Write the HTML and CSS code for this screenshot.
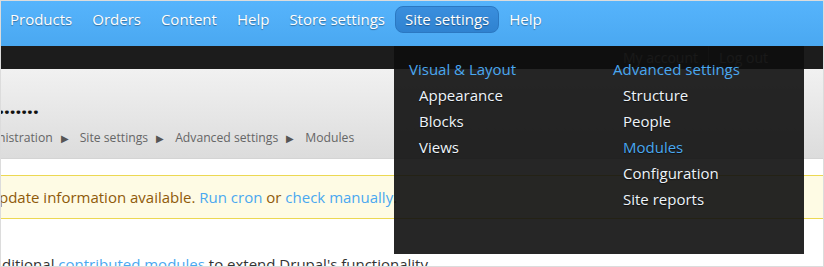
FILE: index.html
```html
<!DOCTYPE html>
<html>
<head>
<meta charset="utf-8">
<link rel="stylesheet" href="styles.css">
</head>
<body>
<div class="frame">
  <nav class="topbar">
    <a class="nav-item">Products</a>
    <a class="nav-item">Orders</a>
    <a class="nav-item">Content</a>
    <a class="nav-item">Help</a>
    <a class="nav-item">Store settings</a>
    <a class="nav-item active">Site settings</a>
    <a class="nav-item">Help</a>
  </nav>
  <div class="userbar">
    <span>My account</span><span class="sep"></span><span>Log out</span>
  </div>
  <header class="page-head">
    <h1 class="title">.......</h1>
    <div class="crumbs">
      <span class="crumb first">nistration</span><span class="arrow">&#9654;</span>
      <span class="crumb">Site settings</span><span class="arrow">&#9654;</span>
      <span class="crumb">Advanced settings</span><span class="arrow">&#9654;</span>
      <span class="crumb">Modules</span>
    </div>
  </header>
  <main class="content">
    <div class="msg">pdate information available. <a class="link">Run cron</a> or <a class="link">check manually</a>.</div>
    <p class="intro">ditional <a class="link">contributed modules</a> to extend Drupal's functionality.</p>
  </main>
  <div class="dropdown">
    <div class="col">
      <div class="col-head">Visual &amp; Layout</div>
      <div class="col-item">Appearance</div>
      <div class="col-item">Blocks</div>
      <div class="col-item">Views</div>
    </div>
    <div class="col">
      <div class="col-head">Advanced settings</div>
      <div class="col-item">Structure</div>
      <div class="col-item">People</div>
      <div class="col-item current">Modules</div>
      <div class="col-item">Configuration</div>
      <div class="col-item">Site reports</div>
    </div>
  </div>
</div>
</body>
</html>
```
FILE: styles.css
```css
* { box-sizing: border-box; }
html, body { margin: 0; padding: 0; background: #fff; }
body { font-family: "Open Sans", "Noto Sans", sans-serif; width: 824px; height: 267px; overflow: hidden; }

.frame {
  position: relative;
  width: 824px;
  height: 267px;
  border: 1px solid #dcdcdc;
  overflow: hidden;
  background: #fff;
}

.topbar {
  height: 45px;
  display: flex;
  align-items: flex-start;
  padding-top: 5px;
  margin-left: -1px;
  background: linear-gradient(#56b4fc, #4aa8f1);
}
.nav-item {
  display: block;
  height: 27px;
  line-height: 27px;
  padding: 0 10px;
  font-size: 15px;
  color: #fff;
  text-shadow: 0 1px 1px rgba(0,0,0,0.35);
  border-radius: 8px;
  white-space: nowrap;
}
.nav-item.active {
  line-height: 25px;
  padding: 0 9px;
  background: linear-gradient(#3a8fde, #2f82d0);
  border: 1px solid #2b78c2;
}

.userbar {
  height: 23px;
  background: #1c1c1c;
  display: flex;
  align-items: center;
  padding-left: 622px;
  gap: 10px;
  font-size: 14px;
  color: #7a7a7a;
}
.userbar .sep { width: 1px; height: 23px; background: #444; }

.page-head {
  height: 90px;
  background: linear-gradient(#f1f1f1, #dcdcdc);
  border-bottom: 1px solid #d4d4d4;
  padding-top: 24px;
}
.title {
  margin: 0 0 0 -3px;
  font-size: 22px;
  line-height: 24px;
  font-weight: 700;
  color: #111;
  letter-spacing: -0.5px;
}
.crumbs {
  margin-top: 12px;
  font-size: 12.2px;
  color: #666;
  display: flex;
  align-items: center;
  white-space: nowrap;
  margin-left: -3px;
}
.arrow { font-size: 10px; color: #555; margin: 0 11px 0 8px; }

.content { padding-top: 16px; }
.msg {
  height: 44px;
  background: #fefbe4;
  border-top: 1px solid #ecd852;
  border-bottom: 1px solid #ecd852;
  font-size: 15px;
  line-height: 42px;
  color: #8f5a0a;
  white-space: nowrap;
  padding-left: 0;
  text-indent: -2px;
}
.link { color: #4aa8f0; }
.intro {
  margin: 35px 0 0 1px;
  font-size: 15px;
  line-height: 20px;
  color: #333;
  white-space: nowrap;
}

.dropdown {
  position: absolute;
  left: 393px;
  top: 45px;
  width: 410px;
  height: 208px;
  background: rgba(14,14,14,0.9);
  display: grid;
  grid-template-columns: 204px 1fr;
  padding: 10px 15px;
}
.col-head {
  font-size: 15px;
  line-height: 26px;
  color: #4aa8f0;
}
.col-item {
  font-size: 15px;
  line-height: 26px;
  color: #eef4fa;
  padding-left: 10px;
  text-shadow: 0 1px 1px rgba(0,0,0,0.6);
}
.col-item.current { color: #4aa8f0; }
```
